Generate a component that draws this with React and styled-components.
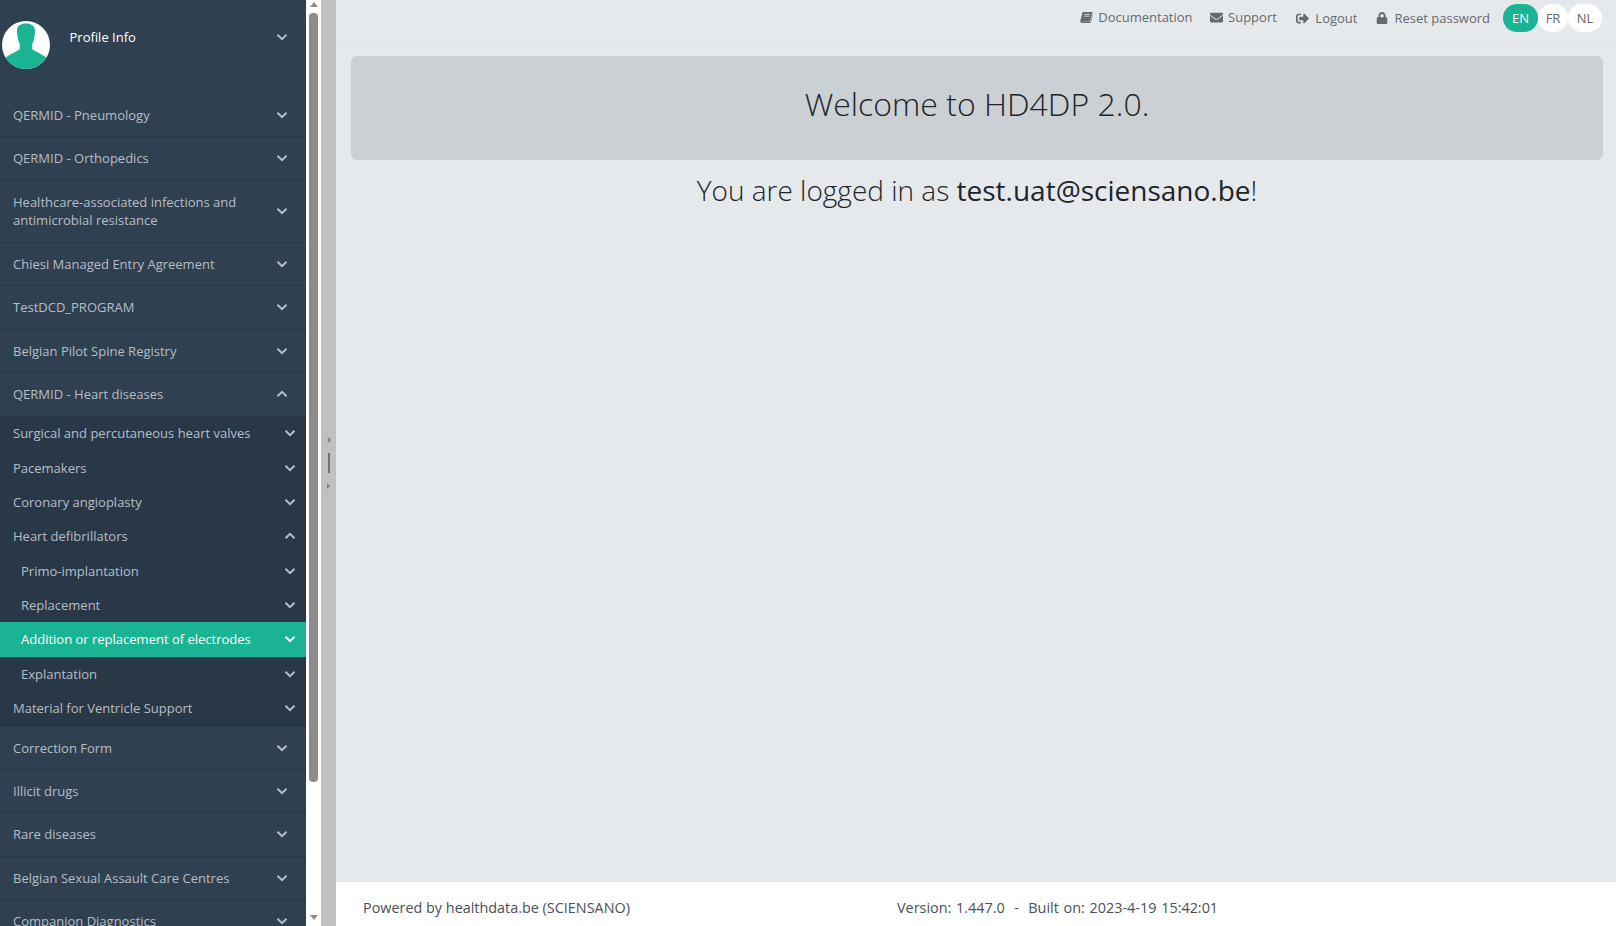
import React from "react";
import styled, { createGlobalStyle } from "styled-components";
import { FaEnvelope, FaLock, FaSignOutAlt } from "react-icons/fa";

const Global = createGlobalStyle`
  html, body { margin: 0; padding: 0; height: 100%; overflow: hidden; }
  body { font-family: "Open Sans", "Liberation Sans", sans-serif; font-size: 13px; color: #676a6c; background: #e6e9ec; }
  #root { height: 100%; }
`;

const Page = styled.div`
  display: flex;
  height: 926px;
  width: 1616px;
  overflow: hidden;
`;

const Sidebar = styled.nav`
  width: 306px;
  flex: none;
  background: #2f4050;
  overflow: hidden;
`;

const ProfileRow = styled.div`
  display: flex;
  align-items: flex-start;
  height: 93.5px;
  padding: 21px 18px 0 2px;
  box-sizing: border-box;
  color: #fff;
`;

const ProfileName = styled.span`
  flex: 1;
  margin-left: 19.5px;
  line-height: 20px;
  margin-top: 6px;
`;

const ProfileChevron = styled.span`
  margin-top: 6px;
  line-height: 20px;
  display: flex;
  align-items: center;
  height: 20px;
`;

const Row = styled.div`
  display: flex;
  align-items: center;
  justify-content: space-between;
  box-sizing: border-box;
  height: ${(p) => p.$h || 43.4}px;
  padding: 0 18px 0 13px;
  line-height: 18px;
  color: #b6bec6;
  border-bottom: ${(p) => (p.$open ? "none" : "1px solid #293846")};
`;

const RowLabel = styled.span`
  max-width: 240px;
`;

const SubList = styled.div`
  background: #293846;
  border-bottom: 1px solid #263341;
`;

const SubRow = styled.div`
  display: flex;
  align-items: center;
  justify-content: space-between;
  box-sizing: border-box;
  height: 34.4px;
  padding: 0 10px 0 ${(p) => (p.$deep ? 21 : 13)}px;
  color: ${(p) => (p.$active ? "#fff" : "#b6bec6")};
  background: ${(p) => (p.$active ? "#1ab394" : "transparent")};
`;

const Scrollbar = styled.div`
  width: 15px;
  flex: none;
  background: #fff;
  display: flex;
  flex-direction: column;
  align-items: center;
  justify-content: flex-start;
`;

const ScrollArrow = styled.div`
  width: 0;
  height: 0;
  border-left: 4px solid transparent;
  border-right: 4px solid transparent;
  ${(p) => (p.$down ? "border-top: 5px solid #8c8c8c; margin-top: 133px;" : "border-bottom: 5px solid #8c8c8c; margin-top: 2px;")}
`;

const ScrollThumb = styled.div`
  width: 9px;
  height: 769px;
  margin-top: 6px;
  border-radius: 4px;
  background: #8c8c8c;
`;

const Splitter = styled.div`
  width: 15px;
  flex: none;
  background: #c0c0c0;
  display: flex;
  flex-direction: column;
  align-items: center;
  justify-content: center;
  gap: 10px;
`;

const SplitArrow = styled.div`
  width: 0;
  height: 0;
  border-top: 3px solid transparent;
  border-bottom: 3px solid transparent;
  ${(p) => (p.$right ? "border-left: 3px solid #7a7f86;" : "border-right: 3px solid #7a7f86;")}
`;

const SplitHandle = styled.div`
  width: 2px;
  height: 20px;
  background: #6e7276;
`;

const Main = styled.main`
  flex: 1;
  min-width: 0;
  display: flex;
  flex-direction: column;
  background: #e6e9ec;
`;

const TopBar = styled.header`
  height: 42px;
  box-sizing: border-box;
  flex: none;
  display: flex;
  align-items: flex-start;
  justify-content: flex-end;
  padding: 4px 14px 0 0;
  border-bottom: 1px solid #dfe3e6;
`;

const TopLink = styled.a`
  display: flex;
  align-items: center;
  gap: ${(p) => p.$gap || 6}px;
  height: 26px;
  margin-right: ${(p) => p.$mr || 18}px;
  color: #676a6c;
  font-size: 13px;
  position: relative;
  top: ${(p) => p.$top || 0}px;
  svg { color: #676a6c; }
`;

const LangGroup = styled.div`
  display: flex;
`;

const Lang = styled.span`
  height: 28px;
  width: ${(p) => p.$w}px;
  display: flex;
  align-items: center;
  justify-content: center;
  border-radius: 14px;
  font-size: 13px;
  background: ${(p) => (p.$active ? "#1ab394" : "#fff")};
  color: ${(p) => (p.$active ? "#fff" : "#676a6c")};
`;

const Content = styled.section`
  flex: 1;
  padding: 14px 13px 0 15px;
  display: flex;
  flex-direction: column;
`;

const Jumbo = styled.div`
  height: 104px;
  background: #cbd0d4;
  border-radius: 6px;
  display: flex;
  align-items: center;
  justify-content: center;
`;

const Title = styled.h1`
  margin: 0 0 8px;
  font-weight: 300;
  font-size: 32px;
  line-height: 40px;
  color: #212529;
`;

const Logged = styled.p`
  margin: 11px 0 0;
  text-align: center;
  font-weight: 300;
  font-size: 28px;
  line-height: 38px;
  color: #212529;
`;

const Email = styled.span`
  font-weight: 400;
`;

const Footer = styled.footer`
  height: 45px;
  box-sizing: border-box;
  flex: none;
  background: #fff;
  border-top: 1px solid #dfe3e6;
  display: flex;
  align-items: center;
  padding: 6px 0 0 27px;
  font-size: 14.4px;
  color: #495057;
`;

const FooterLeft = styled.span`
  width: 534px;
`;

const FooterRight = styled.span`
  word-spacing: 1px;
`;

const Chevron = ({ up, color = "#b6bec6" }) => (
  <svg width="12" height="8" viewBox="0 0 12 8" fill="none" style={{ flex: "none" }}>
    <polyline
      points={up ? "1.5,6.2 6,1.8 10.5,6.2" : "1.5,1.8 6,6.2 10.5,1.8"}
      stroke={color}
      strokeWidth="2"
    />
  </svg>
);

const Avatar = () => (
  <svg width="48" height="48" viewBox="0 0 48 48" style={{ flex: "none" }}>
    <defs>
      <clipPath id="av"><circle cx="24" cy="24" r="24" /></clipPath>
    </defs>
    <g clipPath="url(#av)">
      <rect width="48" height="48" fill="#fff" />
      <path d="M15 10 C15 4.5 19 2.5 24 2.5 C29 2.5 33 4.5 33 10 C33 16 31.5 20.5 30 24 L30.5 28.5 C35 31 40 33.5 47 38 L48 48 L0 48 L1 38 C8 33.5 13 31 17.5 28.5 L18 24 C16.5 20.5 15 16 15 10 Z" fill="#1ab394" />
    </g>
  </svg>
);

const BookIcon = () => (
  <svg width="13" height="11" viewBox="0 0 13 11" style={{ flex: "none" }}>
    <path d="M3.2 0 H12.6 L10.3 8.2 C10.1 8.9 9.6 9.2 9 9.2 H2.2 C1.7 9.2 1.6 9.6 2.2 9.6 H10.4 L12.8 2 L13 2.4 L10.9 10 C10.8 10.6 10.4 11 9.8 11 H2 C0.8 11 0 10 0.3 8.8 L2.4 1 C2.5 0.4 2.8 0 3.2 0 Z" fill="#676a6c" />
    <path d="M4.4 2.4 H10 M3.9 4.2 H9.5" stroke="#e6e9ec" strokeWidth="0.8" />
  </svg>
);

const TOP_A = [
  { t: "QERMID - Pneumology" },
  { t: "QERMID - Orthopedics" },
  { t: "Healthcare-associated infections and antimicrobial resistance", h: 62.5 },
  { t: "Chiesi Managed Entry Agreement" },
  { t: "TestDCD_PROGRAM" },
  { t: "Belgian Pilot Spine Registry" },
];

const SUBS = [
  { label: "Surgical and percutaneous heart valves" },
  { label: "Pacemakers" },
  { label: "Coronary angioplasty" },
  { label: "Heart defibrillators", up: true },
  { label: "Primo-implantation", deep: true },
  { label: "Replacement", deep: true },
  { label: "Addition or replacement of electrodes", deep: true, active: true },
  { label: "Explantation", deep: true },
  { label: "Material for Ventricle Support" },
];

const TOP_B = ["Correction Form", "Illicit drugs", "Rare diseases", "Belgian Sexual Assault Care Centres", "Companion Diagnostics"];

export default function App() {
  return (
    <Page>
      <Global />
      <Sidebar>
        <ProfileRow>
          <Avatar />
          <ProfileName>Profile Info</ProfileName>
          <ProfileChevron><Chevron /></ProfileChevron>
        </ProfileRow>
        {TOP_A.map(({ t, h }) => (
          <Row key={t} $h={h}>
            <RowLabel>{t}</RowLabel>
            <Chevron />
          </Row>
        ))}
        <Row $open $h={43}>
          <RowLabel>QERMID - Heart diseases</RowLabel>
          <Chevron up />
        </Row>
        <SubList>
          {SUBS.map((s) => (
            <SubRow key={s.label} $deep={s.deep} $active={s.active}>
              <span>{s.label}</span>
              <Chevron up={s.up} color={s.active ? "#fff" : "#b6bec6"} />
            </SubRow>
          ))}
        </SubList>
        {TOP_B.map((t) => (
          <Row key={t}>
            <RowLabel>{t}</RowLabel>
            <Chevron />
          </Row>
        ))}
      </Sidebar>
      <Scrollbar>
        <ScrollArrow />
        <ScrollThumb />
        <ScrollArrow $down />
      </Scrollbar>
      <Splitter>
        <SplitArrow />
        <SplitHandle />
        <SplitArrow $right />
      </Splitter>
      <Main>
        <TopBar>
          <TopLink $gap={5} $mr={17.5}><BookIcon />Documentation</TopLink>
          <TopLink $gap={5} $mr={19.5}><FaEnvelope size={13} />Support</TopLink>
          <TopLink $gap={6} $mr={19} $top={1}><FaSignOutAlt size={13} />Logout</TopLink>
          <TopLink $gap={6} $mr={13} $top={1}><FaLock size={12} />Reset password</TopLink>
          <LangGroup>
            <Lang $active $w={35}>EN</Lang>
            <Lang $w={30}>FR</Lang>
            <Lang $w={34}>NL</Lang>
          </LangGroup>
        </TopBar>
        <Content>
          <Jumbo><Title>Welcome to HD4DP 2.0.</Title></Jumbo>
          <Logged>You are logged in as <Email>test.uat@sciensano.be</Email>!</Logged>
        </Content>
        <Footer>
          <FooterLeft>Powered by healthdata.be (SCIENSANO)</FooterLeft>
          <FooterRight>Version: 1.447.0 &nbsp;-&nbsp; Built on: 2023-4-19 15:42:01</FooterRight>
        </Footer>
      </Main>
    </Page>
  );
}
